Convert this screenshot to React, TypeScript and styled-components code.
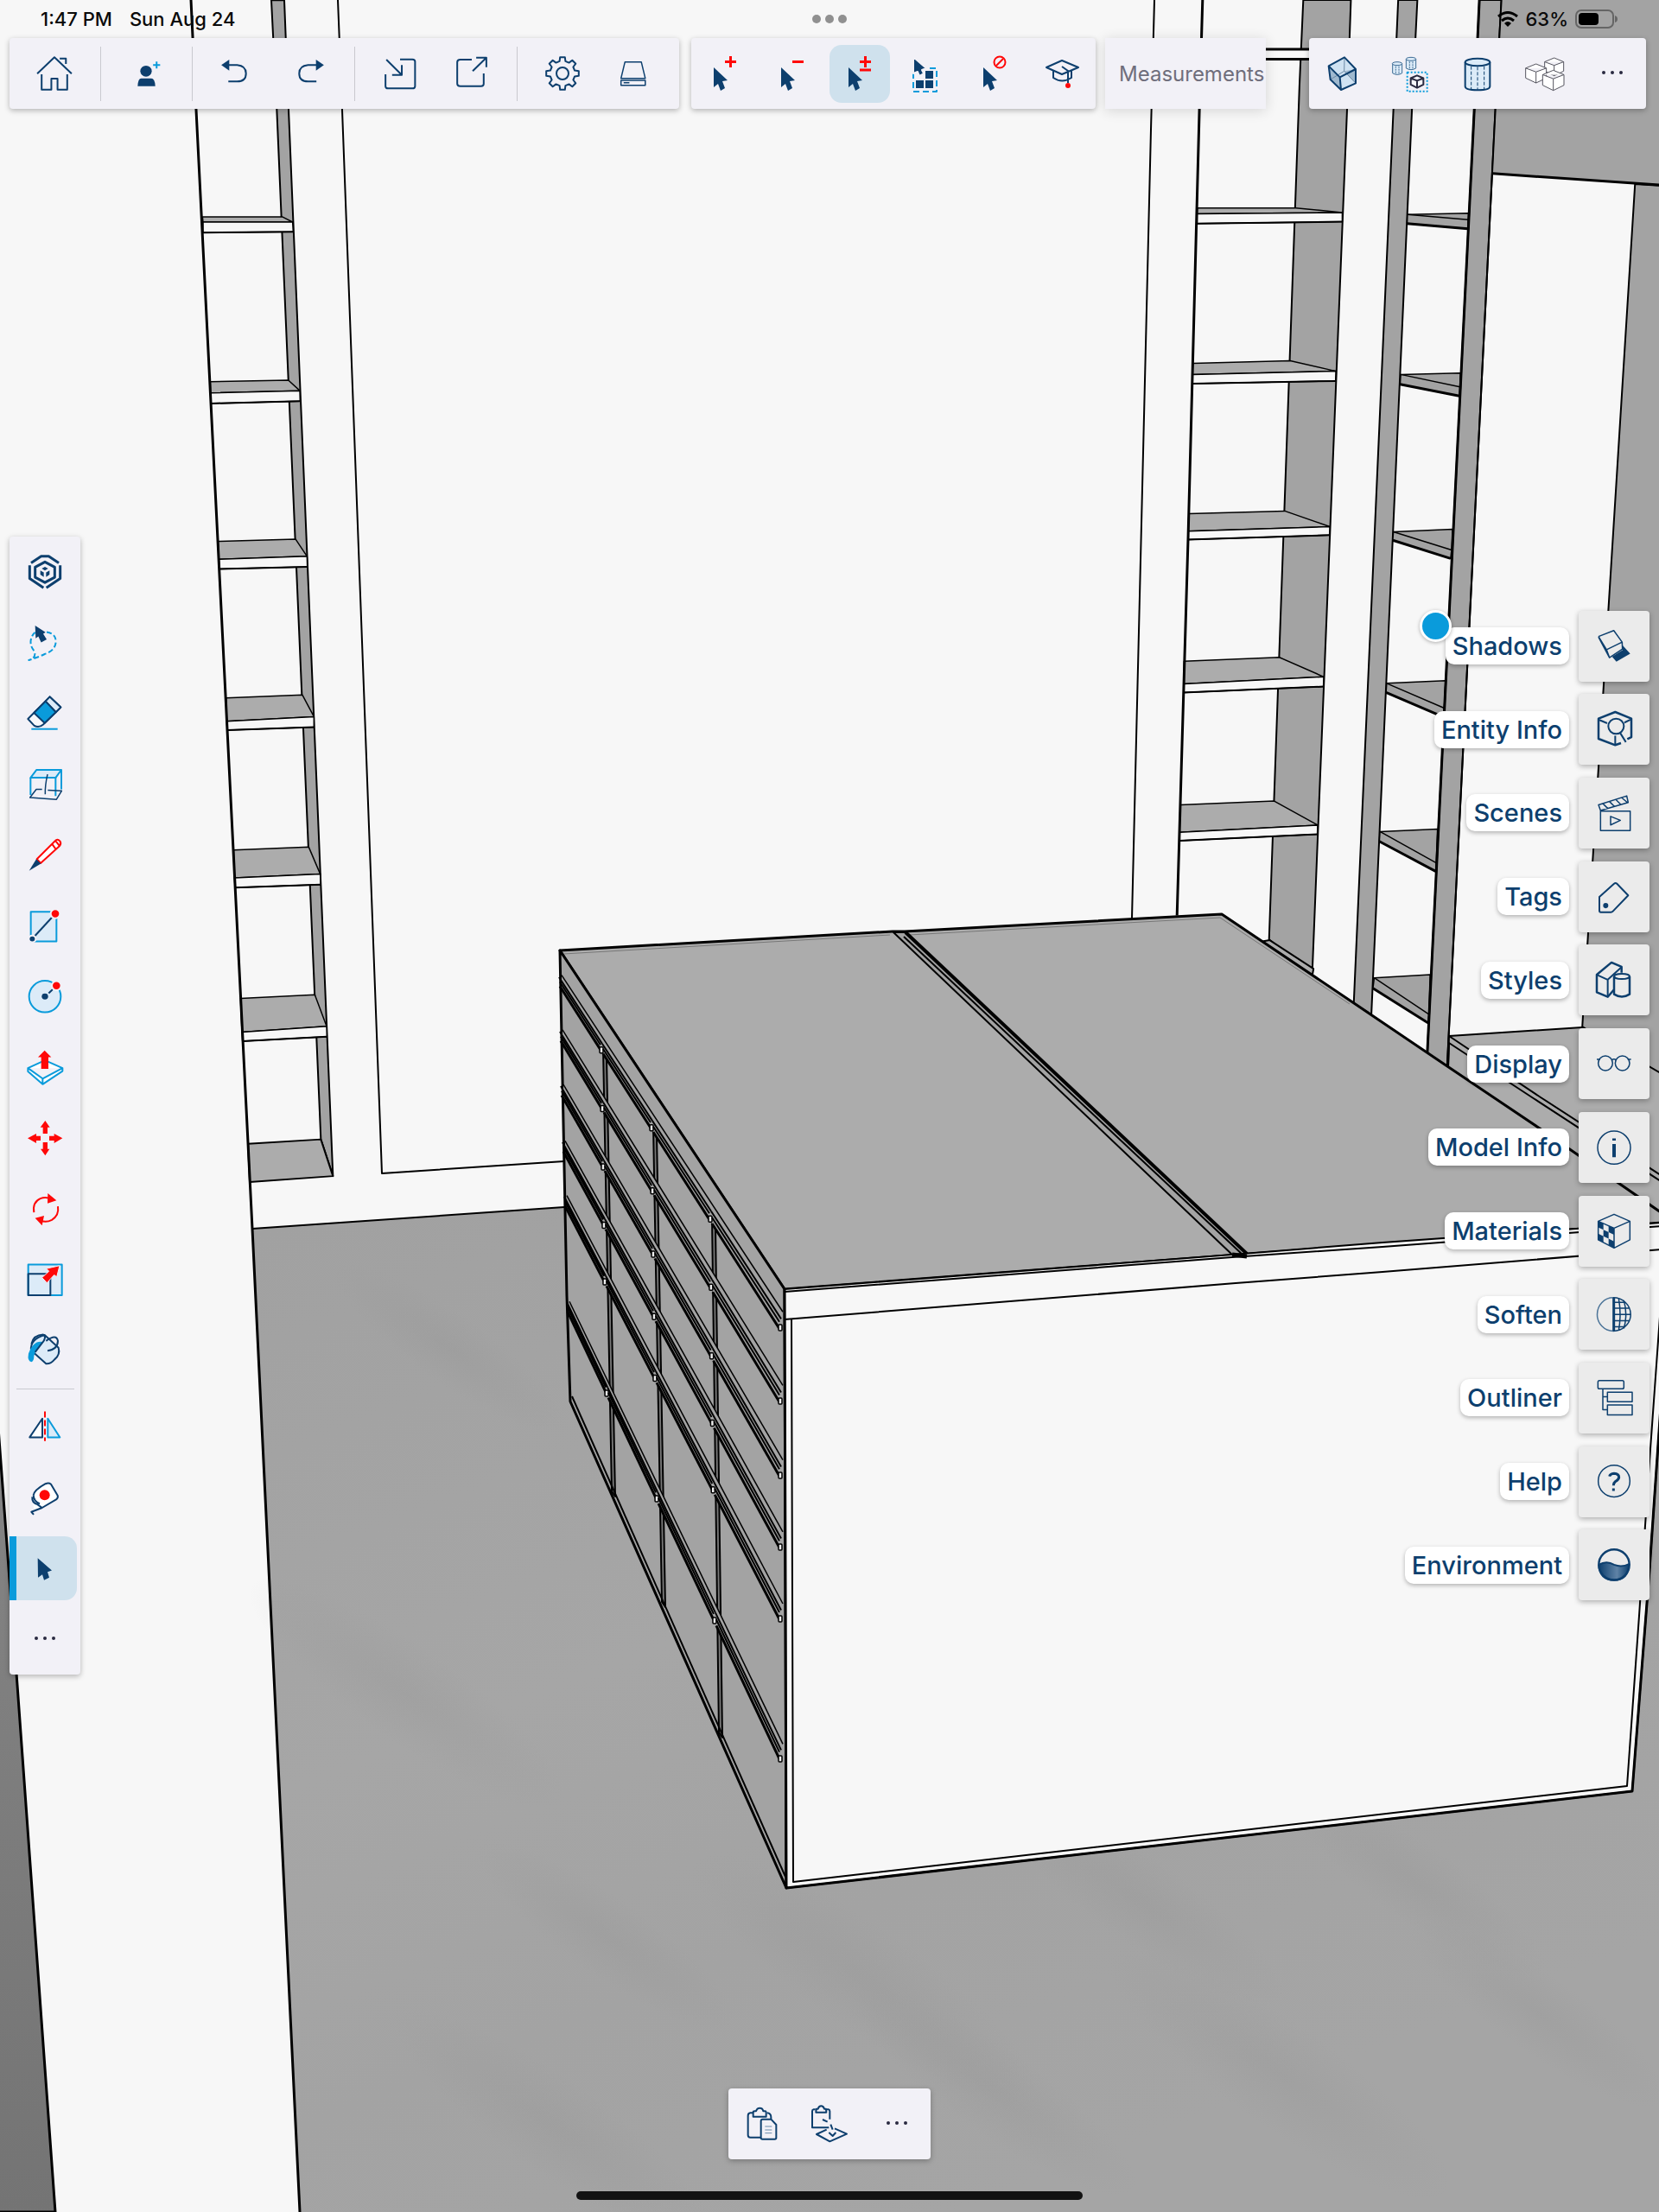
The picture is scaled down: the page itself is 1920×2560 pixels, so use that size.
import React from "react";
import styled, { createGlobalStyle, css } from "styled-components";

const NAVY = "#0d3f6e";
const BLUE = "#0a9bdb";
const PALE = "#dcebf8";
const RED = "#ff0808";
const INK = "#2a2a40";

const GlobalStyle = createGlobalStyle`
  *, *::before, *::after { box-sizing: border-box; }
  body { margin: 0; background: #f7f7f7; font-family: Inter, "Liberation Sans", sans-serif; }
  button, input { font: inherit; color: inherit; }
`;

/* ---------- layout ---------- */

const Page = styled.div`
  position: relative;
  display: flex;
  flex-direction: column;
  min-height: 100vh;
  overflow: hidden;
`;

const Scene = styled.svg`
  position: absolute;
  inset: 0;
  width: 100%;
  height: 100%;
  path, polygon, line { vector-effect: non-scaling-stroke; }
`;

const Header = styled.header`
  position: relative;
  padding-bottom: 16px;
`;

const StatusBar = styled.div`
  display: grid;
  grid-template-columns: 1fr auto 1fr;
  align-items: center;
  height: 44px;
  padding: 0 47px;
  font-size: 22px;
  font-weight: 500;
  color: #0a0a0a;
`;

const StatusGroup = styled.div<{ $end?: boolean }>`
  display: flex;
  align-items: center;
  gap: ${(p) => (p.$end ? 8 : 20)}px;
  justify-content: ${(p) => (p.$end ? "flex-end" : "flex-start")};
`;

const Grabber = styled.div`
  display: flex;
  gap: 5px;
  i { width: 10px; height: 10px; border-radius: 50%; background: #909090; }
`;

const ToolRow = styled.div`
  display: flex;
  align-items: center;
  padding: 0 15px 0 11px;
`;

const surface = css`
  background: #f2f1f7;
  border-radius: 4px;
  box-shadow: 0 2px 6px rgba(0, 0, 0, 0.28);
`;

const Toolbar = styled.div<{ $vertical?: boolean }>`
  ${surface}
  display: flex;
  flex-direction: ${(p) => (p.$vertical ? "column" : "row")};
  ${(p) => (p.$vertical ? "width: 82px;" : "height: 82px;")}
  align-items: center;
`;

const SelectBar = styled(Toolbar)`
  margin-left: 14px;
`;

const ToolGroup = styled.div`
  display: flex;
  align-items: center;
  height: 63px;
  padding: 0 12px 0 11px;
  & + & { border-left: 1px solid #c9c9cf; }
`;

const ToolButton = styled.button<{ $kind?: "wide" | "rail"; $active?: boolean }>`
  display: flex;
  align-items: center;
  justify-content: center;
  flex: none;
  border: 0;
  padding: 0;
  background: ${(p) => (p.$active ? "#cfe1ed" : "transparent")};
  ${(p) =>
    p.$kind === "rail"
      ? css`
          width: 78px;
          height: 74px;
          margin: 4px 4px 4px 0;
          padding-left: ${p.$active ? 0 : 4}px;
          border-left: ${p.$active ? `8px solid ${BLUE}` : 0};
          padding-right: ${p.$active ? 4 : 0}px;
          border-radius: 0 14px 14px 0;
        `
      : p.$kind === "wide"
      ? css`
          width: 82px;
          height: 63px;
        `
      : css`
          width: 70px;
          height: 67px;
          margin: 0 4px;
          border-radius: 14px;
        `}
`;

const RailRule = styled.hr`
  width: 67px;
  height: 1px;
  margin: 2px 0;
  border: 0;
  background: #c9c9cf;
`;

const Measurements = styled.input`
  width: 186px;
  height: 82px;
  margin: 0 auto 0 11px;
  padding: 0 0 0 16px;
  border: 0;
  background: #f2f1f7;
  box-shadow: 0 2px 14px rgba(0, 0, 0, 0.14);
  font-size: 24px;
  &::placeholder { color: #6f6e7c; opacity: 1; }
`;

const Workspace = styled.main`
  position: relative;
  flex: 1;
  display: flex;
  justify-content: space-between;
  align-items: center;
  padding: 0 11px;
`;

const Panels = styled.nav`
  display: flex;
  flex-direction: column;
  justify-content: space-between;
  align-items: flex-end;
  height: 1146px;
`;

const PanelButton = styled.button`
  display: flex;
  align-items: center;
  gap: 11px;
  border: 0;
  padding: 0;
  background: none;
`;

const PanelLabel = styled.span`
  position: relative;
  height: 43px;
  line-height: 43px;
  padding: 0 8px;
  border-radius: 10px;
  background: #fff;
  box-shadow: 0 2px 5px rgba(0, 0, 0, 0.28);
  color: ${NAVY};
  font-size: 29px;
  font-weight: 500;
`;

const PanelTile = styled.span`
  display: flex;
  align-items: center;
  justify-content: center;
  width: 82px;
  height: 82px;
  border-radius: 4px;
  background: #ebebeb;
  box-shadow: 0 2px 6px rgba(0, 0, 0, 0.3);
`;

const NewDot = styled.i`
  position: absolute;
  left: -30px;
  top: -20px;
  width: 37px;
  height: 37px;
  border-radius: 50%;
  border: 3px solid #fff;
  background: ${BLUE};
  box-shadow: 0 1px 4px rgba(0, 0, 0, 0.3);
`;

const Footer = styled.footer`
  position: relative;
  display: flex;
  flex-direction: column;
  align-items: center;
  gap: 37px;
  padding-bottom: 14px;
`;

const HomeBar = styled.div`
  width: 586px;
  height: 10px;
  border-radius: 5px;
  background: #121212;
`;

/* ---------- icons ---------- */

const IconSvg = styled.svg`
  width: 48px;
  height: 48px;
  flex: none;
  fill: none;
  stroke: ${NAVY};
  stroke-width: 2px;
  stroke-linejoin: round;
  * { vector-effect: non-scaling-stroke; }
`;

const Icon = ({ box = "0 0 48 48", children }: { box?: string; children: React.ReactNode }) => (
  <IconSvg viewBox={box} preserveAspectRatio="none" aria-hidden="true">
    {children}
  </IconSvg>
);

const solid = (fill: string) => ({ fill, stroke: "none" });

const POINTER = "M11 17L27 32L21 33L24 41L19 44L16 36L11 40Z";

const gearPath = () => {
  const out: string[] = [];
  for (let i = 0; i < 8; i++) {
    const mid = (i * Math.PI) / 4;
    [
      [-0.24, 14.5],
      [-0.15, 19],
      [0.15, 19],
      [0.24, 14.5],
    ].forEach(([a, r]) => {
      out.push(`${(24 + r * Math.sin(mid + a)).toFixed(1)} ${(24 - r * Math.cos(mid + a)).toFixed(1)}`);
    });
  }
  return `M${out.join("L")}Z`;
};

const Dots = () => (
  <Icon>
    {[14, 24, 34].map((x) => (
      <circle key={x} cx={x} cy={23} r={2} {...solid(INK)} />
    ))}
  </Icon>
);

const IsoCube = ({ x, y, w, h, fill = "#fff" }: { x: number; y: number; w: number; h: number; fill?: string }) => (
  <path
    fill={fill}
    d={`M${x} ${y}L${x + w} ${y + h * 0.22}V${y + h * 0.74}L${x} ${y + h}L${x - w} ${y + h * 0.74}V${y + h * 0.22}Z
      M${x - w} ${y + h * 0.22}L${x} ${y + h * 0.42}L${x + w} ${y + h * 0.22}M${x} ${y + h * 0.42}V${y + h}`}
  />
);

const MaterialChecks = () => {
  const xs = [749, 767, 785, 804];
  const cells: string[] = [];
  const at = (i: number, j: number) => {
    const top = 375 + (21 * (xs[i] - 749)) / 55;
    const h = 56 + (4 * i) / 3;
    return `${xs[i]} ${(top + (h * j) / 3).toFixed(1)}`;
  };
  for (let i = 0; i < 3; i++)
    for (let j = 0; j < 3; j++)
      if ((i + j) % 2 === 0) cells.push(`M${at(i, j)}L${at(i + 1, j)}L${at(i + 1, j + 1)}L${at(i, j + 1)}Z`);
  return <path d={cells.join("")} {...solid(NAVY)} />;
};

const fileTools = [
  [
    {
      name: "Home",
      icon: (
        <Icon box="76 183 94 144">
          <path d="M84 256L123 199L162 256M135 203H149V222M94 258V311H116V273H130V311H152V258" />
        </Icon>
      ),
    },
  ],
  [
    {
      name: "Invite",
      icon: (
        <Icon box="284 183 94 144">
          <ellipse cx="331" cy="247" rx="13" ry="19" {...solid(NAVY)} />
          <path d="M312 299Q313 272 320 272H343Q351 272 352 299Z" {...solid(NAVY)} />
          <path d="M355 214V238M347 226H363" stroke={BLUE} />
        </Icon>
      ),
    },
  ],
  [
    {
      name: "Undo",
      icon: (
        <Icon box="492 183 94 144">
          <path d="M502 226L520 207V245Z" {...solid(NAVY)} />
          <path d="M519 226H538Q558 229 558 255Q558 283 538 283H518" />
        </Icon>
      ),
    },
    {
      name: "Redo",
      icon: (
        <Icon box="653 183 94 144">
          <path d="M735 226L717 207V245Z" {...solid(NAVY)} />
          <path d="M718 226H699Q679 229 679 255Q679 283 699 283H718" />
        </Icon>
      ),
    },
  ],
  [
    {
      name: "Import",
      icon: (
        <Icon box="860 183 94 144">
          <path d="M907 206H935Q941 206 941 214V299Q941 307 935 307H880Q874 307 874 299V258M876 207L911 260M911 226V260H889" />
        </Icon>
      ),
    },
    {
      name: "Export",
      icon: (
        <Icon box="1021 183 94 144">
          <path d="M1070 207H1044Q1037 207 1037 216V290Q1037 299 1044 299H1091Q1097 299 1097 291V255M1072 247L1103 200M1080 200H1103V233" />
        </Icon>
      ),
    },
  ],
  [
    {
      name: "Settings",
      icon: (
        <Icon>
          <path d={gearPath()} />
          <circle cx="24" cy="24" r="7" />
        </Icon>
      ),
    },
    {
      name: "Storage",
      icon: (
        <Icon box="1390 183 94 144">
          <g strokeWidth="1.5">
            <path d="M1418 215H1455L1464 272H1409ZM1415 287H1428" />
            <rect x="1409" y="279" width="55" height="17" />
          </g>
        </Icon>
      ),
    },
  ],
];

const selectTools = [
  {
    name: "Add to selection",
    icon: (
      <Icon>
        <path d={POINTER} {...solid(NAVY)} />
        <path d="M30.500 4V17M24 10.500H37" stroke={RED} strokeWidth="3" />
      </Icon>
    ),
  },
  {
    name: "Remove from selection",
    icon: (
      <Icon>
        <path d={POINTER} {...solid(NAVY)} />
        <path d="M24 10.500H37" stroke={RED} strokeWidth="3" />
      </Icon>
    ),
  },
  {
    name: "Toggle selection",
    active: true,
    icon: (
      <Icon>
        <path d={POINTER} {...solid(NAVY)} />
        <path d="M30.500 4V17M24 10.500H37M24 20H37" stroke={RED} strokeWidth="3" />
      </Icon>
    ),
  },
  {
    name: "Select all",
    icon: (
      <Icon>
        <rect x="8" y="18" width="27" height="27" stroke={BLUE} strokeDasharray="7 4" strokeDashoffset="3" />
        <path d="M22 21H31V30H22ZM11 32H20V41H11ZM22 32H31V41H22Z" {...solid(NAVY)} />
        <path d="M8 5L23 18L18 20L20 24L15 27L13 22L8 24Z" fill={NAVY} stroke="#f2f1f7" />
      </Icon>
    ),
  },
  {
    name: "Clear selection",
    icon: (
      <Icon>
        <path d={POINTER} {...solid(NAVY)} />
        <circle cx="30" cy="11" r="6.500" stroke={RED} />
        <path d="M26 15L34 7" stroke={RED} />
      </Icon>
    ),
  },
  {
    name: "Instructor",
    icon: (
      <Icon>
        <path d="M6 17L24 9L43 17L24 25ZM14 21V29Q24 36 35 29V21M24 16L31 21V35" />
        <circle cx="31" cy="38" r="3" {...solid(RED)} />
      </Icon>
    ),
  },
];

const viewTools = [
  {
    name: "X-ray",
    icon: (
      <Icon box="270 183 144 144">
        <path d="M293 229L348 199L387 240V289L336 312L299 276Z" {...solid("#cfe2f2")} />
        <path d="M293 229L332 268L336 312L299 276ZM347 247L387 289V240Z" {...solid("#9fb9cf")} />
        <path d="M348 199L347 247L299 276M347 247L387 289" stroke="#6c8aa5" strokeWidth="1" />
        <path d="M293 229L348 199L387 240V289L336 312L299 276ZM293 229L332 268L387 240M332 268L336 312" />
      </Icon>
    ),
  },
  {
    name: "Component edit",
    icon: (
      <Icon box="504 183 144 144">
        <g fill={PALE} stroke="#3d6c95" strokeWidth="1">
          <path d="M515 221V254Q531 264 548 254V221M562 205V237Q579 247 596 237V205" />
          <ellipse cx="531" cy="221" rx="17" ry="6" />
          <ellipse cx="579" cy="205" rx="17" ry="6" />
          <path d="M526 230V258M537 230V258M574 214V242M585 214V242" strokeDasharray="2 1" />
        </g>
        <rect x="566" y="251" width="69" height="66" stroke={BLUE} strokeDasharray="2 2" />
        <g stroke={INK}>
          <IsoCube x={600} y={262} w={22} h={43} fill="#f7f7fb" />
        </g>
      </Icon>
    ),
  },
  {
    name: "Hidden geometry",
    icon: (
      <Icon box="738 183 144 144">
        <path d="M767 216V300Q767 313 810 313Q853 313 853 300V216" fill={PALE} />
        <ellipse cx="810" cy="216" rx="43" ry="13" fill={PALE} />
        <path d="M788 230V311M810 232V312M833 230V311" strokeWidth="1" strokeDasharray="4 2" />
      </Icon>
    ),
  },
  {
    name: "Hide rest of model",
    icon: (
      <Icon box="972 183 144 144">
        <g stroke="#55555f" strokeWidth="1">
          <IsoCube x={1076} y={201} w={33} h={62} />
          <IsoCube x={1013} y={222} w={36} h={66} />
          <IsoCube x={1073} y={244} w={37} h={70} />
        </g>
      </Icon>
    ),
  },
  { name: "More views", icon: <Dots /> },
];

const railTools = [
  {
    name: "Extension hub",
    icon: (
      <Icon box="84 64.600 144 110.700">
        <g strokeWidth="3">
          <path d="M108 96L143 78H169L204 96M103 102V137L151 162M209 102V137L161 162" />
          <path d="M156 93L190 107V134L156 148L122 134V107Z" />
        </g>
        <path d="M156 106L167 111L156 116L145 111ZM140 116L152 121V133L140 127ZM172 116L160 121V133L172 127Z" {...solid(NAVY)} />
      </Icon>
    ),
  },
  {
    name: "Lasso",
    icon: (
      <Icon box="84 253.700 144 110.700">
        <path d="M162 280Q194 284 194 306Q192 330 155 339Q128 349 100 355Q126 350 120 332Q104 318 107 302Q110 288 122 281" stroke={BLUE} strokeDasharray="6 3" />
        <path d="M122 263L158 281L150 285L162 300L143 308L133 292L124 297Z" {...solid(NAVY)} />
      </Icon>
    ),
  },
  {
    name: "Eraser",
    icon: (
      <Icon box="84 442.800 144 110.700">
        <path d="M97 512L173 453L211 481L150 527Q135 537 119 530Z" fill="#f7f9fc" />
        <path d="M158 465L173 453L211 481L194 494Z" fill={PALE} />
        <path d="M118 496L158 465L194 494L155 523Z" fill={BLUE} />
        <path d="M109 539H200" stroke={BLUE} />
      </Icon>
    ),
  },
  {
    name: "Section plane",
    icon: (
      <Icon box="84 631.900 144 110.700">
        <path d="M106 669L127 648H213L193 669Z" fill={PALE} stroke={BLUE} />
        <path d="M106 669V715M193 669V718M213 648V700" stroke={BLUE} />
        <path d="M146 700H126L104 722L196 727L214 704L166 702M165 660Q156 690 157 713" strokeWidth="1.500" />
      </Icon>
    ),
  },
  {
    name: "Line",
    icon: (
      <Icon box="84 821 144 110.700">
        <path d="M128 886L192 837Q199 831 208 838Q214 845 207 851L141 897ZM181 846L194 860M192 837L207 851" stroke={RED} fill="#fff" />
        <path d="M101 917L126 886L142 898Z" {...solid(NAVY)} />
      </Icon>
    ),
  },
  {
    name: "Rectangle",
    icon: (
      <Icon box="84 1010.100 144 110.700">
        <rect x="107" y="1027" width="89" height="79" fill={PALE} stroke={BLUE} />
        <path d="M112 1099L192 1032" />
        <ellipse cx="112" cy="1099" rx="12" ry="9" fill={NAVY} stroke="#f2f1f7" />
        <ellipse cx="192" cy="1032" rx="16" ry="12" fill={RED} stroke="#f2f1f7" />
      </Icon>
    ),
  },
  {
    name: "Circle",
    icon: (
      <Icon box="84 1199.200 144 110.700">
        <ellipse cx="156" cy="1253" rx="55" ry="42" fill={PALE} stroke={BLUE} />
        <ellipse cx="156" cy="1253" rx="11" ry="8" {...solid(NAVY)} />
        <path d="M169 1244L183 1234" />
        <ellipse cx="196" cy="1224" rx="16" ry="12" fill={RED} stroke="#f2f1f7" />
      </Icon>
    ),
  },
  {
    name: "Push pull",
    icon: (
      <Icon box="84 1388.300 144 110.700">
        <path d="M97 1444L156 1423L217 1444V1452L148 1487L97 1453ZM97 1444L148 1472L217 1444M148 1472V1487" fill="#fff" stroke={BLUE} />
        <path d="M155 1397L178 1415H168V1446H143V1415H132Z" {...solid(RED)} />
      </Icon>
    ),
  },
  {
    name: "Move",
    icon: (
      <Icon box="84 55.300 144 110.700">
        <path
          d="M96 109L126 97V103H141V115H126V122ZM217 109L188 97V103H171V115H188V122ZM157 62L173 80H165V97H149V80H140ZM157 155L172 138H165V120H149V138H141Z"
          {...solid(RED)}
        />
      </Icon>
    ),
  },
  {
    name: "Rotate",
    icon: (
      <Icon box="84 244.400 144 110.700">
        <path d="M118 307Q112 280 140 270Q155 265 170 269M201 291Q206 315 180 327Q160 335 142 329" stroke={RED} />
        <path d="M166 256L196 275L165 283ZM153 316L122 322L146 342Z" {...solid(RED)} />
      </Icon>
    ),
  },
  {
    name: "Scale",
    icon: (
      <Icon box="84 433.500 144 110.700">
        <rect x="98" y="446" width="117" height="82" fill={PALE} stroke={BLUE} />
        <rect x="98" y="471" width="77" height="57" />
        <path d="M207 449L197 479L188 474L163 495L146 481L170 464L161 457Z" fill={RED} stroke="#f2f1f7" strokeWidth="1" />
      </Icon>
    ),
  },
  {
    name: "Paint",
    icon: (
      <Icon box="84 622.600 144 110.700">
        <path d="M155 634L203 668Q210 686 190 699Q176 712 160 711L108 675Q104 645 155 634Z" fill={PALE} />
        <path d="M152 653Q116 646 99 684Q94 705 109 706Q118 704 118 690Q122 672 152 653Z" {...solid(BLUE)} />
        <path d="M109 658Q116 634 150 633Q164 639 146 656L122 680M165 676Q200 673 201 650Q196 630 160 650" />
      </Icon>
    ),
  },
  {
    name: "Flip",
    icon: (
      <Icon box="84 823 144 110.700">
        <path d="M103 907L147 857V907Z" fill="#fff" />
        <path d="M166 857L208 907H166Z" fill={PALE} stroke={BLUE} />
        <path d="M156 838V917" stroke={RED} strokeDasharray="7 3" />
      </Icon>
    ),
  },
  {
    name: "Tape measure",
    icon: (
      <Icon box="84 1012 144 110.700">
        <path d="M116 1062Q118 1048 158 1031Q169 1027 177 1032L200 1062Q203 1069 195 1073L146 1095L109 1106L117 1113M112 1066Q110 1082 130 1086L146 1095M116 1060Q116 1078 138 1084" fill="#fff" />
        <ellipse cx="155" cy="1061" rx="18" ry="14" {...solid(RED)} />
      </Icon>
    ),
  },
  {
    name: "Select",
    active: true,
    icon: (
      <Icon box="84 1201 144 110.700">
        <path d="M131 1229L180 1262L165 1266L171 1281L153 1288L147 1273L132 1281Z" {...solid(NAVY)} />
      </Icon>
    ),
  },
  { name: "More tools", icon: <Dots /> },
];

const panels = [
  {
    name: "Shadows",
    dot: true,
    icon: (
      <Icon box="732 89 144 125.400">
        <path d="M834 149L860 174L812 198L797 183L834 163Z" {...solid(NAVY)} />
        <path d="M750 122L803 104L832 139L833 160L788 186L750 124M750 122L778 162L832 139M778 162L788 186" strokeWidth="1.500" />
      </Icon>
    ),
  },
  {
    name: "Entity Info",
    icon: (
      <Icon box="732 341.500 144 125.400">
        <g strokeWidth="2.500">
          <path d="M828 446L808 452L750 433V372L808 352L864 372V428L850 434" />
        </g>
        <path d="M753 376L780 386M861 375L840 384M808 424V450M825 415L845 443" />
        <ellipse cx="811" cy="395" rx="27" ry="23" />
      </Icon>
    ),
  },
  {
    name: "Scenes",
    icon: (
      <Icon box="732 594.300 144 125.400">
        <g strokeWidth="1.500">
          <path d="M757 651H860V710H757ZM792 667V693L826 679Z" />
          <path d="M750 632L848 605L853 625L757 649ZM765 628L782 643M788 622L805 637M810 616L827 631M830 610L850 625" />
        </g>
      </Icon>
    ),
  },
  {
    name: "Tags",
    icon: (
      <Icon box="732 847 144 125.400">
        <path d="M753 910L804 870Q809 866 814 870L853 905L800 953Q797 956 793 956H758Q753 956 753 951Z" />
        <ellipse cx="775" cy="936" rx="9" ry="8" {...solid(NAVY)} />
      </Icon>
    ),
  },
  {
    name: "Styles",
    icon: (
      <Icon box="732 1099.800 144 125.400">
        <g strokeWidth="2.500">
          <path d="M830 1141V1123L795 1110L744 1147V1200L782 1214L804 1192" />
          <path d="M804 1152V1206Q831 1221 858 1206V1152" />
        </g>
        <path d="M744 1147L782 1162L830 1124M782 1162V1214" />
        <ellipse cx="831" cy="1152" rx="27" ry="8" />
      </Icon>
    ),
  },
  {
    name: "Display",
    icon: (
      <Icon box="732 1352.500 144 125.400">
        <g strokeWidth="1.500">
          <ellipse cx="774" cy="1414" rx="25" ry="22" />
          <ellipse cx="833" cy="1414" rx="25" ry="22" />
          <path d="M796 1404Q804 1399 811 1404M744 1402H756M863 1402H851" />
        </g>
      </Icon>
    ),
  },
  {
    name: "Model Info",
    icon: (
      <Icon box="732 89.900 144 125.400">
        <ellipse cx="804" cy="153" rx="57" ry="50" strokeWidth="1.500" />
        <path d="M804 125V132M804 142V182" strokeWidth="4" />
      </Icon>
    ),
  },
  {
    name: "Materials",
    icon: (
      <Icon box="732 342.700 144 125.400">
        <MaterialChecks />
        <path d="M804 354L859 375V431L804 456L749 431V375ZM749 375L804 396L859 375M804 396V456" strokeWidth="1.500" />
      </Icon>
    ),
  },
  {
    name: "Soften",
    icon: (
      <Icon box="732 595.400 144 125.400">
        <path d="M801 608A55 50 0 0 0 801 709" stroke="#4c7498" strokeWidth="1.500" />
        <path d="M801 608A60 50 0 0 1 801 709M820 610Q830 659 820 707M838 616Q852 659 838 701M803 622H843M803 640H857M803 659H861M803 678H857M803 696H843" strokeWidth="1.500" />
        <path d="M803 608V709" strokeWidth="3" />
      </Icon>
    ),
  },
  {
    name: "Outliner",
    icon: (
      <Icon box="732 848.200 144 125.400">
        <g strokeWidth="1.500">
          <rect x="748" y="858" width="90" height="25" rx="5" ry="5" />
          <path d="M781 893H867V922H781ZM781 932H867V962H781ZM765 883V946H781M765 907H781" />
        </g>
      </Icon>
    ),
  },
  {
    name: "Help",
    icon: (
      <Icon box="732 1100.900 144 125.400">
        <ellipse cx="804" cy="1161" rx="55" ry="48" strokeWidth="1.500" />
        <path d="M788 1147Q790 1139 804 1138Q821 1139 821 1150Q820 1157 808 1163Q802 1167 802 1175M802 1183V1191" strokeWidth="3" />
      </Icon>
    ),
  },
  {
    name: "Environment",
    icon: (
      <Icon box="732 1353.700 144 125.400">
        <defs>
          <linearGradient id="sea" x1="0" x2="1">
            <stop offset="0" stopColor={NAVY} />
            <stop offset="0.6" stopColor="#5f83a6" />
            <stop offset="1" stopColor={NAVY} />
          </linearGradient>
        </defs>
        <path d="M751 1416Q778 1402 804 1416Q830 1425 856 1414Q854 1463 804 1463Q753 1461 751 1416" fill="url(#sea)" />
        <ellipse cx="804" cy="1416" rx="53" ry="46" strokeWidth="2.500" />
      </Icon>
    ),
  },
];

const pasteTools = [
  {
    name: "Paste",
    icon: (
      <Icon box="114 132 144 144">
        <path d="M153 166H145Q137 167 137 176V243Q137 251 145 251H181M203 166Q217 167 217 181V187" />
        <path d="M155 179V164Q155 160 160 160H165Q168 149 178 149Q188 149 190 160H196Q200 160 200 164V179Z" />
        <path d="M182 194Q182 188 188 188H217L235 207V252Q235 257 230 257H187Q182 257 182 252Z" />
        <path d="M196 213H220M196 225H220M196 236H220" stroke="#6b8dac" strokeWidth="1" />
      </Icon>
    ),
  },
  {
    name: "Paste in place",
    icon: (
      <Icon box="348 132 144 144">
        <path d="M371 154H365Q360 155 360 160V217H418M411 154H416Q421 155 421 160V188" />
        <path d="M373 164L374 152H380Q383 142 391 142Q399 142 402 152H408L409 164Z" />
        <path d="M396 189L413 197M424 206L431 224M418 234L431 246L442 234M410 224L375 240L421 265L480 239L438 220" />
      </Icon>
    ),
  },
  { name: "More actions", icon: <Dots /> },
];

/* ---------- 3D model ---------- */

const SIDE = "#a3a3a3";
const TOP = "#acacac";
const WALL = "#f7f7f7";

type Pt = [number, number];
const pts = (...p: Pt[]) => p.map(([x, y]) => `${x},${y}`).join(" ");

/* Shelf: back-left, back-right, front-right, front-left, lower-left, lower-right */
type Shelf = [Pt, Pt, Pt, Pt, Pt, Pt];

const leftShelves: Shelf[] = [
  [[73, 174], [350, 174], [386, 181], [75, 181], [75, 195], [388, 194]],
  [[100, 394], [371, 392], [411, 406], [101, 409], [103, 423], [412, 420]],
  [[127, 607], [396, 604], [436, 627], [130, 631], [132, 644], [437, 641]],
  [[155, 816], [420, 812], [460, 841], [157, 847], [159, 859], [460, 855]],
  [[181, 1019], [442, 1015], [482, 1051], [184, 1056], [186, 1069], [483, 1065]],
  [[205, 1217], [463, 1212], [504, 1254], [210, 1262], [212, 1274], [505, 1268]],
];

const rightShelves: Shelf[] = [
  [[124, 187], [432, 187], [577, 194], [123, 196], [123, 211], [577, 208]],
  [[110, 426], [414, 422], [557, 438], [108, 443], [108, 457], [556, 453]],
  [[97, 657], [397, 653], [538, 677], [94, 684], [94, 697], [537, 690]],
  [[82, 884], [380, 878], [519, 908], [81, 919], [81, 932], [518, 923]],
  [[70, 1105], [364, 1099], [500, 1136], [68, 1147], [67, 1160], [499, 1150]],
];

/* Narrow bay: back-left, back-right, front-right, lower-right, lower-left */
const cornerShelves: Pt[][] = [
  [[781, 197], [972, 195], [971, 205], [970, 219], [780, 211]],
  [[760, 443], [947, 441], [945, 462], [943, 476], [758, 458]],
  [[737, 685], [922, 681], [919, 713], [916, 726], [735, 698]],
  [[716, 918], [900, 914], [896, 956], [894, 970], [714, 932]],
  [[695, 1146], [875, 1142], [871, 1194], [869, 1207], [693, 1161]],
  [[677, 1371], [852, 1366], [848, 1427], [845, 1440], [673, 1387]],
];

const Shelves = ({ items }: { items: Shelf[] }) => (
  <>
    {items.map(([a, b, c, d, e, f], i) => (
      <g key={i} strokeWidth="1.500">
        <polygon points={pts(a, b, c, d)} fill={TOP} />
        <polygon points={pts(d, c, f, e)} fill={WALL} />
        <path d={`M${e}L${f}`} strokeWidth="2" />
      </g>
    ))}
  </>
);

/* Drawer pulls: x and y at the far edge, y at the near edge, drift of the column lines */
const pulls = [
  { x: 647, far: 1137, near: 1536, drift: 0 },
  { x: 648, far: 1200, near: 1621, drift: 0.1 },
  { x: 649, far: 1263, near: 1707, drift: 0.18 },
  { x: 651, far: 1328, near: 1790, drift: 0.27 },
  { x: 653, far: 1391, near: 1873, drift: 0.36 },
  { x: 656, far: 1513, near: 2035, drift: 0.55 },
];

const columns = [
  { top: 697, bottom: 708, y0: 1214, y1: 1726 },
  { top: 755, bottom: 766, y0: 1303, y1: 1854 },
  { top: 823, bottom: 832, y0: 1408, y1: 2005 },
];

const NEAR_X = 905;

const DrawerFace = () => (
  <g>
    {columns.map((c) => (
      <polygon
        key={c.top}
        fill="#777"
        strokeWidth="2"
        points={pts([c.top + 1, c.y0], [c.top + 5, c.y0 + 10], [c.bottom + 4, c.y1 + 6], [c.bottom, c.y1])}
      />
    ))}
    {pulls.map(({ x, far, near, drift }) => {
      const slope = (near - far) / (NEAR_X - 1 - x);
      const yAt = (px: number) => far + (px - x) * slope;
      const depth = (px: number) => 1 + (0.6 * (px - x)) / (NEAR_X - x);
      const at = (px: number, dy: number): Pt => [px, yAt(px) + dy * depth(px)];
      const stops = [x, ...columns.map((c) => c.top + (c.bottom - c.top) * drift), NEAR_X - 1];
      const line = (x0: number, x1: number, dy: number) => `M${at(x0, dy)}L${at(x1, dy)}`;
      return (
        <g key={far}>
          <polygon stroke="none" fill={SIDE} points={pts(at(x + 3, -13), at(NEAR_X, -13), at(NEAR_X, 3), at(x + 3, 3))} />
          <path strokeWidth="1.500" d={line(x + 3, NEAR_X + 1, -13)} />
          {stops.slice(0, 4).map((start, i) => {
            const end = stops[i + 1];
            return (
              <g key={i}>
                <path strokeWidth="2" d={line(start, end, -6) + line(start + 1, end - 2, -2)} />
                <path strokeWidth="3" d={line(start + 1, end - 2, 3)} />
                <rect x={end - 3} y={yAt(end) - 3} width="4" height="7" rx="1" fill="#eee" strokeWidth="1.500" />
              </g>
            );
          })}
        </g>
      );
    })}
  </g>
);

/* Soft marks on the concrete floor: centre x, centre y, length */
const scuffs = [
  [520, 1560, 160],
  [470, 1960, 220],
  [700, 2240, 180],
  [1000, 2290, 240],
  [1320, 2200, 200],
  [1640, 2180, 180],
  [640, 2460, 220],
  [1150, 2420, 200],
  [1480, 2400, 240],
  [1780, 2330, 180],
];

const Model = () => (
  <Scene viewBox="0 0 1920 2560" preserveAspectRatio="xMidYMid slice" role="img" aria-label="3D model of a closet island and shelving">
    <defs>
      <linearGradient id="floor" x1="0" y1="0" x2="0.5" y2="1">
        <stop offset="0" stopColor="#a0a0a0" />
        <stop offset="0.5" stopColor="#a6a6a6" />
        <stop offset="0.75" stopColor="#a3a3a3" />
        <stop offset="1" stopColor="#a5a5a5" />
      </linearGradient>
      <radialGradient id="scuff">
        <stop offset="0" stopColor="#8c8c8c" stopOpacity="0.18" />
        <stop offset="1" stopColor="#8c8c8c" stopOpacity="0" />
      </radialGradient>
      <linearGradient id="shade" x1="0" y1="0" x2="0" y2="1">
        <stop offset="0" stopColor="#858585" />
        <stop offset="1" stopColor="#747474" />
      </linearGradient>
    </defs>
    <rect width="1920" height="2560" fill={WALL} />
    <g stroke="#000" fill="none" strokeWidth="2" strokeLinejoin="round">
      {/* floor and skirting */}
      <polygon points="292,1422 653,1397 1920,1300 1920,2560 347,2560" fill="url(#floor)" stroke="none" />
      {scuffs.map(([x, y, r]) => (
        <ellipse key={`${x}-${y}`} cx={x} cy={y} rx={r} ry={r / 4} fill="url(#scuff)" stroke="none" transform={`rotate(35 ${x} ${y})`} />
      ))}
      <path d="M292 1422L653 1397" />
      <polygon points="-4,1625 20,1950 64,2560 -4,2560" fill="url(#shade)" strokeWidth="3" />
      <path d="M391 0L396 127L442 1358L653 1344M1336 0L1332 150L1310 1063" />

      {/* left bookcase */}
      <g transform="translate(210 100) scale(0.33333 0.86735)">
        <polygon points="312,-115 331,31 484,1405 526,1454 372,31 357,-115" fill={SIDE} />
        <Shelves items={leftShelves} />
        <polygon points="231,1411 484,1405 526,1454 237,1462" fill={TOP} />
      </g>
      <path d="M221 0L227 127L292 1422L347 2560" strokeWidth="3" />

      {/* right bookcase */}
      <g transform="translate(1340 100) scale(0.36990 0.75255)">
        <polygon points="455,-133 443,0 348,1312 483,1365 592,36 604,-133" fill={SIDE} />
        <Shelves items={rightShelves} />
        <polygon points="327,1315 350,1313 487,1357 483,1368" fill={TOP} />
        <polygon points="137,-57 600,-57 598,-42 137,-42" fill={WALL} strokeWidth="3" />
        <polygon points="752,-133 737,36 613,1410 668,1428 795,36 812,-133" fill={SIDE} />
        {cornerShelves.map((p, i) => (
          <g key={i} strokeWidth="1.500">
            <polygon points={pts(...p)} fill={SIDE} />
            <path d={`M${p[0]}L${p[2]}`} />
            <path d={`M${p[4]}L${p[3]}`} strokeWidth="3" />
          </g>
        ))}
        <polygon points="1006,-133 990,36 843,1487 905,1510 1056,36 1075,-133" fill={SIDE} />
        <path d="M1006 -133L990 36L843 1487M140 -133L130 36L95 690L60 1275" strokeWidth="3" />
        <polygon points="1075,-133 1580,-133 1580,152 1048,134" fill={SIDE} stroke="none" />
        <polygon points="1493,150 1580,153 1580,1530 1340,1450 1328,1446" fill={SIDE} />
        <path d="M1048 134L1580 152" strokeWidth="3" />
        <path d="M1075 -133L1056 36L905 1507" />
      </g>

      {/* low counter behind the island */}
      <polygon points="1677,1199 1831,1189 1922,1242 1922,1410 1676,1236" fill={TOP} />
      <path d="M1677 1199L1783 1270L1922 1360M1676 1233L1677 1207L1773 1270L1922 1367" />

      {/* island */}
      <polygon points="648,1100 1033,1078 1047,1078 1414,1058 1567,1161 1675,1234 1782,1306 1922,1403 1922,1415 908,1492" fill={TOP} strokeWidth="3" />
      <path d="M652 1104L1030 1082M1052 1082L1412 1062L1562 1162" stroke="#777" strokeWidth="1" />
      <polygon points="1034,1079 1048,1079 1443,1451 1427,1453" fill={SIDE} />
      <path d="M1048 1079L1443 1451" strokeWidth="4" />
      <path d="M1046 1084L1438 1452" />
      <polygon points="648,1100 908,1492 910,2185 660,1622 656,1500" fill={SIDE} strokeWidth="3" />
      <DrawerFace />
      <path d="M662 1616L909 2172" strokeWidth="2" />
      <polygon points="908,1492 1426,1452 1600,1438 1922,1415 1922,1628 1909,1817 1889,2073 910,2185" fill={WALL} />
      <path d="M908 1495L1426 1455L1600 1443L1922 1419" strokeWidth="2" />
      <path d="M908 1527L1430 1485L1600 1472L1922 1446" />
      <path d="M916 1527L918 2178L1883 2067L1897 1870L1909 1691L1922 1510" />
      <path d="M1426 1452L1443 1454" strokeWidth="5" />
      <path d="M908 1492L910 2185L1889 2073L1909 1817L1922 1628" strokeWidth="3" />
    </g>
  </Scene>
);

/* ---------- app ---------- */

export default function App() {
  return (
    <Page>
      <GlobalStyle />
      <Model />
      <Header>
        <StatusBar>
          <StatusGroup>
            <span>1:47 PM</span>
            <span>Sun Aug 24</span>
          </StatusGroup>
          <Grabber>
            <i />
            <i />
            <i />
          </Grabber>
          <StatusGroup $end>
            <svg width="26" height="18" viewBox="0 0 26 18" fill="none" stroke="#000" strokeWidth="3" aria-label="Wi-Fi">
              <path d="M2 6Q13 -3 24 6M6 11Q13 5 20 11" />
              <path d="M13 18L9 14Q13 10 17 14Z" fill="#000" stroke="none" />
            </svg>
            <span>63%</span>
            <svg width="50" height="22" viewBox="0 0 50 22" fill="none" aria-label="Battery">
              <rect x="1" y="1" width="43" height="20" rx="6" stroke="#555" strokeOpacity="0.8" strokeWidth="2" />
              <rect x="4" y="4" width="23" height="14" rx="4" fill="#000" />
              <path d="M46 7Q49 8 49 11Q49 14 46 15Z" fill="#666" />
            </svg>
          </StatusGroup>
        </StatusBar>
        <ToolRow>
          <Toolbar>
            {fileTools.map((group, i) => (
              <ToolGroup key={i}>
                {group.map((t) => (
                  <ToolButton key={t.name} $kind="wide" aria-label={t.name}>
                    {t.icon}
                  </ToolButton>
                ))}
              </ToolGroup>
            ))}
          </Toolbar>
          <SelectBar>
            {selectTools.map((t) => (
              <ToolButton key={t.name} $active={t.active} aria-label={t.name}>
                {t.icon}
              </ToolButton>
            ))}
          </SelectBar>
          <Measurements placeholder="Measurements" aria-label="Measurements" />
          <Toolbar>
            {viewTools.map((t) => (
              <ToolButton key={t.name} aria-label={t.name}>
                {t.icon}
              </ToolButton>
            ))}
          </Toolbar>
        </ToolRow>
      </Header>
      <Workspace>
        <Toolbar $vertical>
          {railTools.map((t, i) => (
            <React.Fragment key={t.name}>
              {i === 12 && <RailRule />}
              <ToolButton $kind="rail" $active={t.active} aria-label={t.name}>
                {t.icon}
              </ToolButton>
            </React.Fragment>
          ))}
        </Toolbar>
        <Panels>
          {panels.map((p) => (
            <PanelButton key={p.name}>
              <PanelLabel>
                {p.name}
                {p.dot && <NewDot />}
              </PanelLabel>
              <PanelTile>{p.icon}</PanelTile>
            </PanelButton>
          ))}
        </Panels>
      </Workspace>
      <Footer>
        <Toolbar>
          {pasteTools.map((t) => (
            <ToolButton key={t.name} aria-label={t.name}>
              {t.icon}
            </ToolButton>
          ))}
        </Toolbar>
        <HomeBar />
      </Footer>
    </Page>
  );
}
